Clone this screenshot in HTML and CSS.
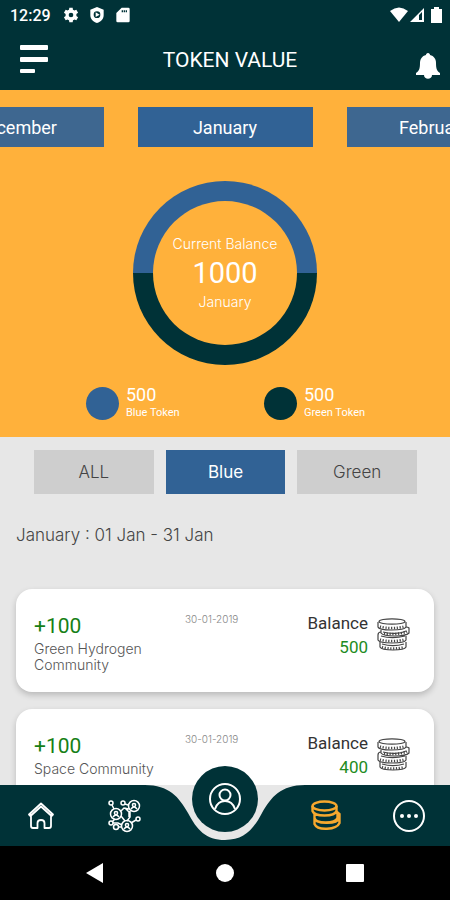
FILE: index.html
```html
<!DOCTYPE html>
<html lang="en">
<head>
<meta charset="utf-8">
<meta name="viewport" content="width=device-width, initial-scale=1">
<title>Token Value</title>
<link rel="stylesheet" href="styles.css">
</head>
<body>
<svg class="symbols" aria-hidden="true">
  <symbol id="coin-stack" viewBox="0 0 34 34">
    <g fill="none" stroke="currentColor" stroke-width="1.2">
      <path d="M3 4.500C3 1 29 1 29 4.500S3 8 3 4.500Z"/>
      <path d="M2 5v5c1 4 26 4 28 0V5"/>
      <path d="M5 13v3c3 4 24 4 28 0v-5c-1-1-2-1-3-1"/>
      <path d="M2 18v5c2 4 26 4 28 0v-4M2 18c0-2 1-3 3-3"/>
      <path d="M4 25v5c2 4 24 4 26 0v-5"/>
      <path d="M7 15c7 2 17 2 23-1M5 19c7 2 16 2 24 0M6 27c7 2 15 2 22 0"/>
    </g>
    <g fill="none" stroke="currentColor" stroke-width="2.500" stroke-dasharray="1.200 1.600">
      <path d="M4 9.500c6 2 18 2 24 0M8 16.500c6 1 16 1 23-2M4 22.500c6 2 18 2 24 0M6 30c6 2 16 2 22 0"/>
    </g>
  </symbol>
</svg>

<div class="status">
  <span class="clock">12:29</span>
  <svg class="status-icon" viewBox="0 0 24 24" aria-hidden="true"><path fill="currentColor" fill-rule="evenodd" d="M20 13.500a8 8 0 0 0 0-3l2.600-2L20 4l-3.100 1.200a8 8 0 0 0-2-1.100L14.500 1h-5l-.5 3.100a8 8 0 0 0-2 1.100L4 4 1.400 8.500l2.600 2a8 8 0 0 0 0 3l-2.600 2L4 20l3-1.200a8 8 0 0 0 2 1.100l.5 3.100h5l.5-3.100a8 8 0 0 0 2-1.100L20 20l2.600-4.500zM12 15.500a3.500 3.500 0 1 1 0-7 3.500 3.500 0 0 1 0 7z"/></svg>
  <svg class="status-icon" viewBox="0 0 24 24" aria-hidden="true"><path fill="currentColor" fill-rule="evenodd" d="M12 0 2 4v8c0 6 4 10 10 12 6-2 10-6 10-12V4zM12 6.500a5 5 0 1 0 0 10 5 5 0 0 0 0-10zM10 8l6 3.500-6 3.500z"/></svg>
  <svg class="status-icon" viewBox="0 0 24 24" aria-hidden="true"><path fill="currentColor" fill-rule="evenodd" d="M10 1h10q2 0 2 2v18q0 2-2 2H4q-2 0-2-2V9zM10 5v3h2V5zm3 0v3h2V5zm3 0v3h2V5z"/></svg>
  <span class="spacer"></span>
  <svg class="signal" viewBox="0 0 54 18" aria-hidden="true">
    <path fill="currentColor" d="M0 5q9-7 18 0L9 16z"/>
    <path fill="currentColor" fill-rule="evenodd" d="M34 2v14H20zM29 9v5h3V6z"/>
    <path fill="currentColor" d="M44 1h5v2h3v14H41V3h3z"/>
  </svg>
</div>

<header class="header">
  <button class="icon-button" aria-label="Menu"><svg class="menu-icon" viewBox="0 0 28 30" aria-hidden="true"><g fill="currentColor"><rect width="28" height="5" rx="1"/><rect y="12" width="28" height="5" rx="1"/><rect y="24" width="15" height="4" rx="1"/></g></svg></button>
  <h1 class="title">TOKEN VALUE</h1>
  <button class="icon-button bell" aria-label="Notifications"><svg class="bell-icon" viewBox="0 0 24 26" aria-hidden="true"><path fill="currentColor" d="M12 0c1.300 0 2 1 2 2 4 1 6 4 6 8 0 6 1 8 4 10v2h-8c0 5-8 5-8 0H0v-2c3-2 4-4 4-10 0-4 2-7 6-8 0-1 .7-2 2-2z"/></svg></button>
</header>

<main class="main">
  <section class="summary">
    <div class="months">
      <button class="month side">December</button>
      <button class="month">January</button>
      <button class="month side">February</button>
    </div>
    <div class="ring">
      <span class="ring-label">Current Balance</span>
      <span class="ring-value">1000</span>
      <span class="ring-label">January</span>
    </div>
    <div class="legend">
      <div class="legend-item"><span class="dot blue"></span><span class="legend-text"><span class="amount">500</span><span class="caption">Blue Token</span></span></div>
      <div class="legend-item"><span class="dot green"></span><span class="legend-text"><span class="amount">500</span><span class="caption">Green Token</span></span></div>
    </div>
  </section>

  <section class="history">
    <div class="tabs">
      <button class="tab">ALL</button>
      <button class="tab active">Blue</button>
      <button class="tab">Green</button>
    </div>
    <p class="range">January : 01 Jan - 31 Jan</p>
    <div class="cards">
      <article class="card">
        <div class="source"><span class="change">+100</span><span class="community">Green Hydrogen Community</span></div>
        <time class="date">30-01-2019</time>
        <div class="balance"><span>Balance</span><span class="balance-value">500</span></div>
        <svg class="stack" aria-hidden="true"><use href="#coin-stack"/></svg>
      </article>
      <article class="card">
        <div class="source"><span class="change">+100</span><span class="community">Space Community</span></div>
        <time class="date">30-01-2019</time>
        <div class="balance"><span>Balance</span><span class="balance-value">400</span></div>
        <svg class="stack" aria-hidden="true"><use href="#coin-stack"/></svg>
      </article>
    </div>
  </section>
</main>

<nav class="tabbar">
  <svg class="notch" viewBox="0 0 160 56" aria-hidden="true"><path fill="#e7e7e7" d="M0 0C24 0 34 12 43 28 52 45 61 55 80 55s28-10 37-27C126 12 136 0 160 0z"/></svg>
  <a class="nav-link" href="#home" aria-label="Home"><svg class="nav-icon" viewBox="0 0 34 34" fill="none" stroke="currentColor" stroke-width="1.800" stroke-linejoin="round" stroke-linecap="round" aria-hidden="true"><path d="M7 16v11q0 2 2 2h4.500v-5q0-3 3.500-3t3.500 3v5H25q2 0 2-2V16M5 15.500 17 4.500l12 11-1.500 1.500L17 7.500 6.500 17z"/></svg></a>
  <a class="nav-link" href="#network" aria-label="Network"><svg class="nav-icon" viewBox="0 0 34 34" fill="none" stroke="currentColor" stroke-width="1.500" aria-hidden="true">
    <circle cx="9" cy="15" r="5.500"/><circle cx="9" cy="14" r="1.600"/><path d="M6 18q3-4 6 0"/>
    <circle cx="27" cy="7" r="5.500"/><circle cx="27" cy="6" r="1.600"/><path d="M24 10q3-4 6 0"/>
    <circle cx="20" cy="27" r="5.500"/><circle cx="20" cy="26" r="1.600"/><path d="M17 30q3-4 6 0"/>
    <circle cx="4" cy="4" r="2"/><circle cx="16" cy="4" r="2"/><circle cx="31" cy="20" r="2"/><circle cx="4" cy="24" r="2"/><circle cx="9" cy="28" r="2.500"/>
    <path d="M5 6l2 4M18 5l3 1M14 12l3-3 5 1M14 17l4 5M23 12v6l-3 4M24 24l5-3M6 24h5l4 2M11 28h3M8 20l-3 3M18 9l4 4v5"/></svg></a>
  <a class="nav-link profile" href="#profile" aria-label="Profile"><svg class="nav-icon" viewBox="0 0 34 34" fill="none" stroke="currentColor" stroke-width="2" aria-hidden="true"><circle cx="17" cy="17" r="15"/><circle cx="17" cy="13" r="5.500"/><path d="M7 27c2-6 6-8 10-8s8 2 10 8"/></svg></a>
  <a class="nav-link current" href="#tokens" aria-label="Tokens"><svg class="nav-icon" viewBox="0 0 34 34" fill="none" stroke="currentColor" stroke-width="2.400" aria-hidden="true"><ellipse cx="15.500" cy="7" rx="12" ry="4.500"/><path d="M3.500 7v5c2 6 22 6 24 0V7M5.500 14v5c1 6 21 6 23 0v-6M28 13l2.500 2v4M5.500 19v6c3 7 22 6 25-1v-6M5.500 19c1 6 22 7 25 0"/></svg></a>
  <a class="nav-link" href="#more" aria-label="More"><svg class="nav-icon" viewBox="0 0 34 34" fill="none" stroke="currentColor" stroke-width="2" aria-hidden="true"><circle cx="17" cy="17" r="15"/><g fill="currentColor" stroke="none"><circle cx="10" cy="17" r="2"/><circle cx="17" cy="17" r="2"/><circle cx="24" cy="17" r="2"/></g></svg></a>
</nav>

<div class="system">
  <button class="system-button" aria-label="Back"><svg class="system-icon" viewBox="0 0 20 20" aria-hidden="true"><path fill="currentColor" d="M18 0v20L1 10z"/></svg></button>
  <button class="system-button" aria-label="Home screen"><svg class="system-icon" viewBox="0 0 20 20" aria-hidden="true"><circle fill="currentColor" cx="10" cy="10" r="9"/></svg></button>
  <button class="system-button" aria-label="Recent apps"><svg class="system-icon" viewBox="0 0 20 20" aria-hidden="true"><rect fill="currentColor" x="1" y="1" width="18" height="18" rx="1"/></svg></button>
</div>
</body>
</html>
```
FILE: styles.css
```css
:root {
  --dark: #003237;
  --blue: #316295;
  --orange: #ffb13b;
  --grey: #e7e7e7;
  --round: Inter, "Open Sans", sans-serif;
}

* { box-sizing: border-box; }

body {
  margin: 0;
  height: 100vh;
  display: flex;
  flex-direction: column;
  overflow: hidden;
  background: var(--grey);
  font-family: Roboto, sans-serif;
}

button {
  border: 0;
  padding: 0;
  background: none;
  color: inherit;
  font: inherit;
}

svg { display: block; }

.symbols {
  position: absolute;
  width: 0;
  height: 0;
}

.status {
  display: flex;
  align-items: center;
  gap: 10px;
  height: 30px;
  padding: 0 6px 0 10px;
  background: var(--dark);
  color: #fff;
}

.clock {
  margin-right: 2px;
  font-size: 16px;
  font-weight: 500;
}

.status-icon { width: 16px; height: 16px; }
.spacer { flex: 1; }
.signal { width: 54px; height: 18px; }

.header {
  display: grid;
  grid-template-columns: 1fr auto 1fr;
  align-items: center;
  height: 60px;
  padding: 0 10px 0 20px;
  background: var(--dark);
  color: #fff;
}

.title {
  margin: 0;
  font-size: 21px;
  font-weight: 400;
}

.icon-button { justify-self: start; }
.menu-icon { width: 28px; height: 30px; }
.bell { justify-self: end; align-self: end; padding-bottom: 11px; }
.bell-icon { width: 24px; height: 26px; }

.main {
  flex: 1;
  min-height: 0;
  overflow: hidden;
}

.summary {
  padding: 17px 0 16px;
  background: var(--orange);
  color: #fff;
}

.months {
  display: flex;
  justify-content: center;
  align-items: center;
  gap: 34px;
  overflow: hidden;
}

.month {
  flex: 0 0 175px;
  height: 40px;
  background: var(--blue);
  font-size: 18px;
}

.side { background: #3e6790; }

.ring {
  display: flex;
  flex-direction: column;
  align-items: center;
  justify-content: center;
  width: 184px;
  height: 184px;
  margin: 34px auto 20px;
  border: 20px solid transparent;
  border-radius: 50%;
  background:
    linear-gradient(var(--orange), var(--orange)) padding-box,
    linear-gradient(var(--blue) 50%, var(--dark) 50%) border-box;
}

.ring-label {
  font: 300 14px/24px var(--round);
}

.ring-value {
  font-size: 29px;
  line-height: 34px;
}

.legend {
  display: grid;
  grid-template-columns: 1fr 1fr;
  padding: 0 8px 0 86px;
}

.legend-item {
  display: flex;
  align-items: center;
  gap: 7px;
}

.dot {
  width: 33px;
  height: 33px;
  border-radius: 50%;
}

.blue { background: var(--blue); }
.green { background: var(--dark); }

.legend-text { display: flex; flex-direction: column; }
.amount { font-size: 18px; line-height: 20px; }
.caption { font-size: 11px; line-height: 16px; }

.history { padding: 13px 16px; }

.tabs {
  display: flex;
  gap: 12px;
  padding: 0 17px 0 18px;
}

.tab {
  flex: 1;
  height: 44px;
  background: #cecece;
  color: #444;
  font: 300 17px/24px var(--round);
}

.active {
  background: var(--blue);
  color: #fff;
  font-weight: 400;
}

.range {
  margin: 29px 0 42px;
  color: #444;
  font: 300 17px/24px var(--round);
}

.cards {
  display: flex;
  flex-direction: column;
  gap: 17px;
}

.card {
  display: grid;
  grid-template-columns: 143px 1fr auto 34px;
  column-gap: 8px;
  min-height: 103px;
  padding: 22px 24px 16px 18px;
  border-radius: 16px;
  background: #fff;
  box-shadow: 0 3px 6px rgba(0, 0, 0, 0.2);
}

.source {
  display: flex;
  flex-direction: column;
  padding-right: 16px;
}

.change {
  color: #168016;
  font-size: 21px;
  line-height: 30px;
}

.community {
  margin-right: -16px;
  padding-right: 16px;
  color: #555;
  font: 300 14px/16px var(--round);
}

.date {
  color: #888;
  font: 300 10px/16px var(--round);
}

.balance {
  display: flex;
  flex-direction: column;
  align-items: flex-end;
  color: #333;
  font-size: 17px;
  line-height: 24px;
}

.balance-value { color: #228b22; }

.stack {
  width: 34px;
  height: 34px;
  margin-top: 6px;
  color: #444;
}

.tabbar {
  position: relative;
  display: grid;
  grid-template-columns: 1fr 1fr 120px 1fr 1fr;
  align-items: center;
  justify-items: center;
  height: 61px;
  background: var(--dark);
  color: #fff;
}

.notch {
  position: absolute;
  top: 0;
  left: calc(50% - 80px);
  width: 160px;
  height: 56px;
}

.nav-link { color: inherit; }
.nav-icon { width: 34px; height: 34px; }
.current { color: #f6a82e; }

.tabbar { padding-bottom: 1px; }

.profile {
  position: relative;
  bottom: 17px;
  display: grid;
  place-items: center;
  width: 66px;
  height: 66px;
  margin: -2px 0;
  border-radius: 50%;
  background: var(--dark);
}

.system {
  display: flex;
  justify-content: center;
  align-items: center;
  gap: 110px;
  height: 54px;
  background: #000;
  color: #fff;
}

.system-icon { width: 20px; height: 20px; }
```
